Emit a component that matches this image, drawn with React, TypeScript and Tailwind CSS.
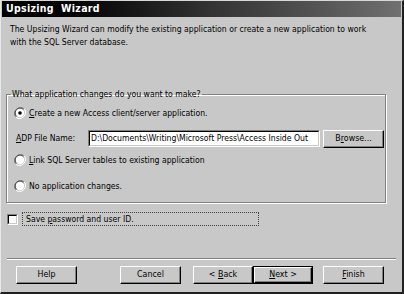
import React from "react";

const font = { fontFamily: '"DejaVu Sans Condensed", "DejaVu Sans", "Liberation Sans", sans-serif' };

function Radio({ checked }: { checked?: boolean }) {
  return (
    <svg width="12" height="12" viewBox="0 0 12 12" className="shrink-0">
      <path d="M10.2 1.8 A6 6 0 0 0 1.8 10.2" fill="none" stroke="#808080" strokeWidth="1" />
      <path d="M9.4 2.6 A4.8 4.8 0 0 0 2.6 9.4" fill="none" stroke="#404040" strokeWidth="1" />
      <path d="M1.8 10.2 A6 6 0 0 0 10.2 1.8" fill="none" stroke="#ffffff" strokeWidth="1" />
      <circle cx="6" cy="6" r="4.2" fill="#ffffff" />
      {checked && <circle cx="6" cy="6" r="1.8" fill="#000000" />}
    </svg>
  );
}

function Btn({ children, def, className }: { children: React.ReactNode; def?: boolean; className?: string }) {
  return (
    <div className={`${def ? "border border-black" : ""} h-[18px] ${className ?? ""}`}>
      <div className="h-full w-full border-t border-l border-white border-r border-b border-r-black border-b-black shadow-[inset_-1px_-1px_0_#808080] bg-[#c8c8c8] flex items-center justify-center text-[8.8px] text-black whitespace-nowrap">
        <span>{children}</span>
      </div>
    </div>
  );
}

export default function App() {
  return (
    <div
      style={font}
      className="w-[404px] h-[294px] bg-[#c8c8c8] border-t border-l border-t-[#d8d8d8] border-l-[#e8e8e8] border-r-2 border-b-2 border-r-[#202020] border-b-[#202020] flex flex-col text-black overflow-hidden"
    >
      <div className="mx-[1px] h-[16px] bg-gradient-to-r from-black via-[#303030] to-[#707070] flex items-center pl-[4px]">
        <span className="text-white font-bold text-[10.5px] tracking-[0.3px]">Upsizing&nbsp; Wizard</span>
      </div>
      <div className="px-[9px] pt-[6px] text-[8.6px] leading-[13px] whitespace-nowrap">
        The Upsizing Wizard can modify the existing application or create a new application to work
        <br />
        with the SQL Server database.
      </div>
      <fieldset className="mx-[5px] mt-[39px] h-[115px] w-[380px] border border-[#808080] shadow-[1px_1px_0_#fff,inset_1px_1px_0_#fff] px-[7px] pb-0 pt-0 min-w-0">
        <legend className="text-[8.6px] leading-[12px] px-[1px] ml-[-3px] whitespace-nowrap">What application changes do you want to make?</legend>
        <div className="flex items-center gap-[3px] mt-[7px] text-[8.6px] h-[12px] whitespace-nowrap">
          <Radio checked />
          <span><u>C</u>reate a new Access client/server application.</span>
        </div>
        <div className="flex items-center mt-[11px] text-[8.6px] h-[17px] whitespace-nowrap">
          <span className="w-[74px] shrink-0 pl-[2px]"><u>A</u>DP File Name:</span>
          <div className="w-[232px] shrink-0 h-[17px] border border-t-[#808080] border-l-[#808080] border-r-white border-b-white">
            <div className="h-full border border-t-black border-l-black border-r-[#c8c8c8] border-b-[#c8c8c8] bg-white flex items-center pl-[1px] overflow-hidden">
              <span>D:\Documents\Writing\Microsoft Press\Access Inside Out</span>
            </div>
          </div>
          <Btn className="w-[61px] shrink-0 ml-[3px]">B<u>r</u>owse...</Btn>
        </div>
        <div className="flex items-center gap-[3px] mt-[7px] text-[8.6px] h-[12px] whitespace-nowrap">
          <Radio />
          <span><u>L</u>ink SQL Server tables to existing application</span>
        </div>
        <div className="flex items-center gap-[3px] mt-[14px] text-[8.6px] h-[12px] whitespace-nowrap">
          <Radio />
          <span>No application chan<u>g</u>es.</span>
        </div>
      </fieldset>
      <div className="flex items-center mt-[9px] ml-[6px] h-[14px]">
        <div className="w-[11px] h-[11px] border border-t-[#808080] border-l-[#808080] border-r-white border-b-white">
          <div className="w-full h-full border border-t-black border-l-black border-r-[#c8c8c8] border-b-[#c8c8c8] bg-white" />
        </div>
        <div className="ml-[4px] w-[237px] h-[14px] border border-dotted border-[#404040] flex items-center pl-[3px] text-[8.6px] whitespace-nowrap">
          <span>Save <u>p</u>assword and user ID.</span>
        </div>
      </div>
      <div className="mt-[32px] mx-[6px] h-[2px] border-t border-t-[#808080] border-b border-b-white" />
      <div className="flex items-center mt-[6px] pl-[15px]">
        <Btn className="w-[61px]">Help</Btn>
        <Btn className="w-[61px] ml-[43px]">Cancel</Btn>
        <Btn className="w-[60px] ml-[12px]">&lt; <u>B</u>ack</Btn>
        <Btn def className="w-[60px]"><u>N</u>ext &gt;</Btn>
        <Btn className="w-[61px] ml-[10px]"><u>F</u>inish</Btn>
      </div>
    </div>
  );
}
